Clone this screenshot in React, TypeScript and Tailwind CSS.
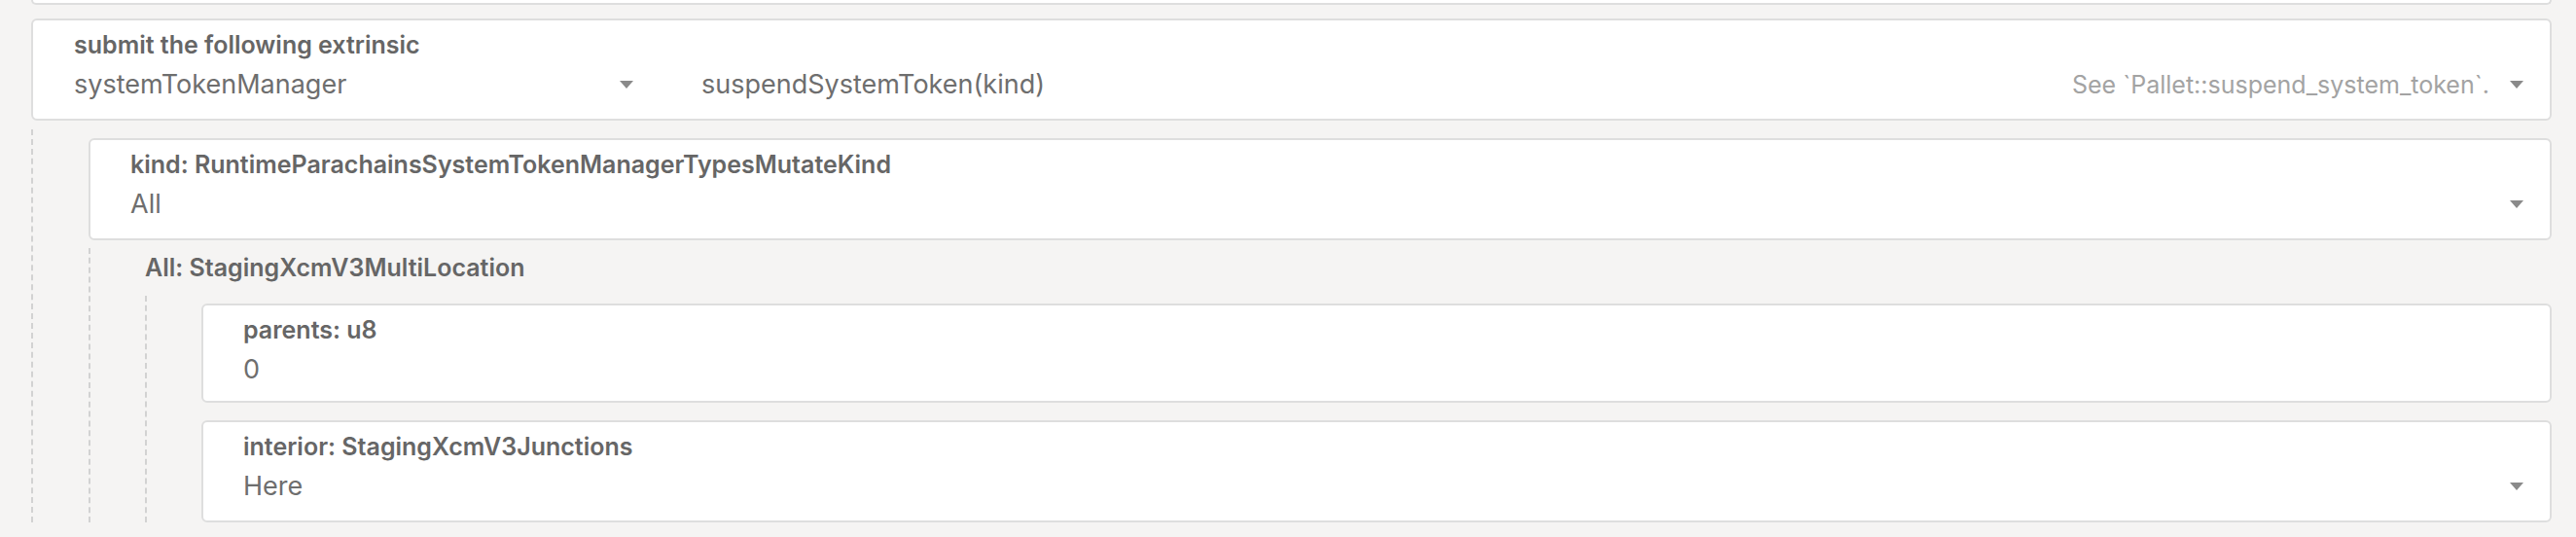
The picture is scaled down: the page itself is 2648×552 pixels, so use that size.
import React from 'react';

function Arrow() {
  return (
    <svg width="14" height="8" viewBox="0 0 14 8" className="shrink-0">
      <path d="M0 0H14L7 8Z" fill="#8a8a8a" />
    </svg>
  );
}

function Label({ children }: { children: React.ReactNode }) {
  return <div className="text-[25px] leading-[30px] font-semibold text-[#666666]">{children}</div>;
}

function Field({ label, value, dropdown }: { label: string; value: string; dropdown?: boolean }) {
  return (
    <div
      className={`${dropdown ? 'h-[105px]' : 'h-[102px]'} rounded-[6px] border-2 border-[#dedede] bg-white pl-[41px] pr-[27px] pt-[10px]`}
    >
      <Label>{label}</Label>
      <div className="mt-[7px] flex items-center">
        <span className="text-[27px] leading-[38px] text-[#6e6e6e]">{value}</span>
        {dropdown && (
          <span className="ml-auto">
            <Arrow />
          </span>
        )}
      </div>
    </div>
  );
}

export default function App() {
  return (
    <main className="min-h-screen bg-[#f5f4f3] pl-[32px] pr-[25px] font-['Inter',sans-serif]">
      {/* tail of the previous card */}
      <div className="h-[5px] rounded-b-[5px] border-2 border-t-0 border-[#dedede] bg-white" />

      {/* extrinsic selector */}
      <div className="mt-[14px] h-[105px] rounded-[6px] border-2 border-[#dedede] bg-white pl-[42px] pr-[27px] pt-[10px]">
        <Label>submit the following extrinsic</Label>
        <div className="mt-[7px] flex items-center">
          <div className="flex w-[575px] items-center">
            <span className="text-[27px] leading-[38px] text-[#6e6e6e]">systemTokenManager</span>
            <span className="ml-auto">
              <Arrow />
            </span>
          </div>
          <div className="ml-[70px] flex flex-1 items-center">
            <span className="text-[27px] leading-[38px] text-[#6e6e6e]">suspendSystemToken(kind)</span>
            <span className="ml-auto text-[25px] leading-[38px] text-[#a3a3a3]">
              See `Pallet::suspend_system_token`.
            </span>
            <span className="ml-[21px]">
              <Arrow />
            </span>
          </div>
        </div>
      </div>

      {/* params */}
      <div className="mt-[9px] border-l-2 border-dashed border-[#d2d2d2] pl-[57px] pt-[9px]">
        <Field label="kind: RuntimeParachainsSystemTokenManagerTypesMutateKind" value="All" dropdown />

        <div className="mt-[8px] border-l-2 border-dashed border-[#d2d2d2] pl-[56px] pt-[5px]">
          <Label>All: StagingXcmV3MultiLocation</Label>
          <div className="mt-[14px] flex flex-col gap-[18px] border-l-2 border-dashed border-[#d2d2d2] pl-[56px] pt-[8px]">
            <Field label="parents: u8" value="0" />
            <Field label="interior: StagingXcmV3Junctions" value="Here" dropdown />
          </div>
        </div>
      </div>
    </main>
  );
}
